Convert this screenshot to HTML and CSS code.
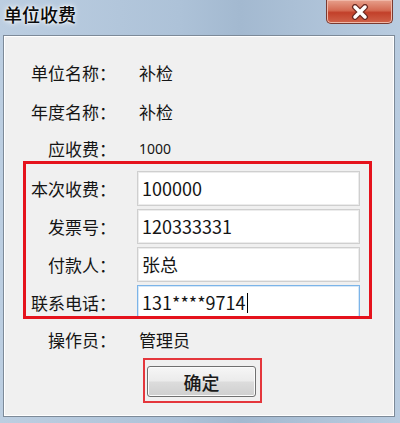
FILE: index.html
```html
<!DOCTYPE html>
<html lang="zh-CN">
<head>
    <meta charset="UTF-8">
    <title>单位收费</title>
    <link rel="stylesheet" href="styles.css">
</head>
<body>
    <div id="window">
        <div id="titleBar">
            <div id="title">单位收费</div>
            <div id="closeButton">
                <svg width="22" height="16" viewBox="0 0 22 16">
                    <path d="M6 3 L16 13 M16 3 L6 13" stroke="#6b2a22" stroke-width="6" stroke-linecap="round"/>
                    <path d="M6 3 L16 13 M16 3 L6 13" stroke="#ffffff" stroke-width="3.5" stroke-linecap="round"/>
                </svg>
            </div>
        </div>
        <div id="panel">
            <div class="infoRow rowOne">
                <div class="label">单位名称：</div>
                <div class="value">补检</div>
            </div>
            <div class="infoRow rowTwo">
                <div class="label">年度名称：</div>
                <div class="value">补检</div>
            </div>
            <div class="infoRow rowThree">
                <div class="label">应收费：</div>
                <div class="value small">1000</div>
            </div>
            <div id="inputBox">
                <div class="inputRow">
                    <div class="label">本次收费：</div>
                    <div class="field">100000</div>
                </div>
                <div class="inputRow">
                    <div class="label">发票号：</div>
                    <div class="field">120333331</div>
                </div>
                <div class="inputRow">
                    <div class="label">付款人：</div>
                    <div class="field">张总</div>
                </div>
                <div class="inputRow">
                    <div class="label">联系电话：</div>
                    <div class="field focused">131****9714<span class="caret"></span></div>
                </div>
            </div>
            <div class="infoRow rowOperator">
                <div class="label">操作员：</div>
                <div class="value">管理员</div>
            </div>
            <div id="buttonRow">
                <div id="buttonMark">
                    <div id="okButton">确定</div>
                </div>
            </div>
        </div>
    </div>
</body>
</html>
```

FILE: styles.css
```css
* {
    margin: 0;
    padding: 0;
    box-sizing: border-box;
}
body {
    width: 400px;
    height: 423px;
    overflow: hidden;
    font-family: 'Noto Sans CJK SC', 'Noto Sans', sans-serif;
    color: #151515;
}
#window {
    width: 400px;
    height: 423px;
    display: flex;
    flex-direction: column;
    background: linear-gradient(90deg, #bccee1 0%, #adc2d8 45%, #a3b9d0 60%, #b9cce0 100%);
}
#titleBar {
    height: 35px;
    display: flex;
    justify-content: space-between;
    align-items: flex-start;
}
#title {
    font-size: 18px;
    font-weight: 500;
    line-height: 29px;
    padding-left: 4px;
    color: #0a0a0a;
    text-shadow: 0 0 6px #ffffff, 0 0 3px #ffffff;
}
#closeButton {
    width: 67px;
    height: 24px;
    margin-right: 7px;
    border: 1px solid #7a3a30;
    border-top: none;
    border-radius: 0 0 5px 5px;
    background: linear-gradient(#e7a08c 0%, #d46a52 45%, #c2402a 55%, #d0634a 100%);
    display: flex;
    justify-content: center;
    align-items: center;
    box-shadow: inset 0 0 0 1px #f0b8a8;
}
#panel {
    flex: 1;
    margin: 0 5px 6px 3px;
    background-color: #f0f0f0;
    border: 1px solid #7d8a98;
    box-shadow: inset 0 0 0 1px #ffffff;
    display: flex;
    flex-direction: column;
    padding-top: 23px;
}
.infoRow {
    display: flex;
    align-items: center;
    height: 26px;
    padding-left: 22px;
}
.rowOne {
    margin-bottom: 13px;
}
.rowTwo {
    margin-bottom: 11px;
}
.rowOperator {
    margin-top: 7px;
}
.label {
    width: 90px;
    text-align: right;
    font-size: 17px;
    white-space: nowrap;
}
.value {
    margin-left: 23px;
    font-size: 17px;
}
.value.small {
    font-family: 'Noto Sans', 'Liberation Sans', sans-serif;
    font-size: 14px;
}
#inputBox {
    margin-left: 19px;
    width: 349px;
    height: 158px;
    border: 3px solid #e5121c;
    padding: 7px 9px 0 0;
    overflow: hidden;
    display: flex;
    flex-direction: column;
    gap: 3px;
}
.inputRow {
    display: flex;
    align-items: center;
    height: 35px;
    flex-shrink: 0;
}
.field {
    margin-left: 21px;
    flex: 1;
    height: 35px;
    background-color: #ffffff;
    border: 1px solid #cfcfcf;
    box-shadow: inset 0 0 0 1px #ececec;
    font-size: 18px;
    line-height: 33px;
    padding-left: 4px;
    display: flex;
    align-items: center;
}
.field.focused {
    border-color: #7cb4e8;
    box-shadow: inset 0 0 0 1px #d6e8f8;
}
.caret {
    display: inline-block;
    width: 1px;
    height: 20px;
    background-color: #000000;
    margin-left: 1px;
}
#buttonRow {
    display: flex;
    padding-left: 139px;
    margin-top: 6px;
}
#buttonMark {
    width: 119px;
    height: 45px;
    border: 2px solid #e4363c;
    padding: 6px 4px 4px 2px;
}
#okButton {
    height: 31px;
    border: 1px solid #707070;
    border-radius: 3px;
    background: linear-gradient(#f6f6f6 0%, #ebebeb 48%, #dcdcdc 52%, #cfcfcf 100%);
    box-shadow: inset 0 0 0 1px #fbfbfb;
    display: flex;
    justify-content: center;
    align-items: center;
    font-size: 18px;
    font-weight: 500;
    color: #1a1a1a;
}
```
